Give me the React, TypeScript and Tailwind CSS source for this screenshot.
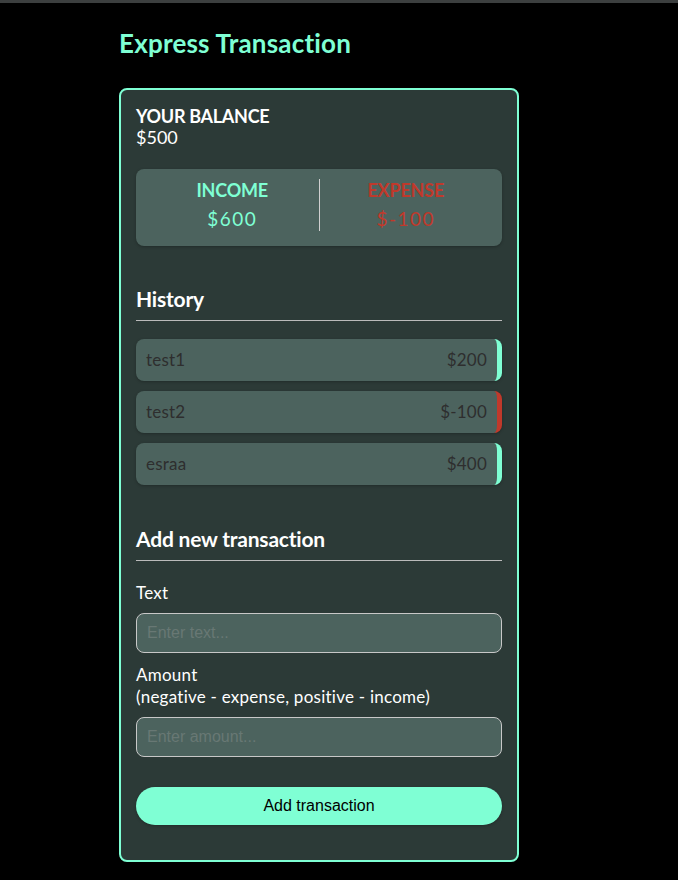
const transactions = [
  { id: 1, text: "test1", amount: 200 },
  { id: 2, text: "test2", amount: -100 },
  { id: 3, text: "esraa", amount: 400 },
];

export default function App() {
  const income = transactions.filter((t) => t.amount > 0).reduce((a, t) => a + t.amount, 0);
  const expense = transactions.filter((t) => t.amount < 0).reduce((a, t) => a + t.amount, 0);
  const total = income + expense;

  return (
    <div className="min-h-[880px] bg-black font-['Lato',sans-serif] border-t-[3px] border-[#3c3f3f]">
      <div className="w-[400px] ml-[119px] pt-[25px]">
        <h1 className="text-[26px] font-bold leading-[30px] text-[#7fffd4] tracking-[0.2px]">
          Express Transaction
        </h1>

        <div className="mt-[30px] rounded-lg border-2 border-[#7fffd4] bg-[#2c3a37] px-[15px] pt-[16px] pb-[35px] text-white">
          <h4 className="text-[18px] font-bold leading-[20px] tracking-[-0.3px]">YOUR BALANCE</h4>
          <div className="text-[18px] leading-[22px]">${total}</div>

          {/* Income / expense summary */}
          <div className="mt-[21px] flex rounded-lg bg-[#4c635e] px-[10px] pt-[10px] pb-[15px] shadow-[0_1px_3px_rgba(0,0,0,0.25)]">
            <div className="flex-1 text-center">
              <div className="text-[18px] font-bold leading-[22px] text-[#7fffd4] tracking-[-0.2px]">INCOME</div>
              <div className="mt-[6px] text-[19px] leading-[24px] tracking-[1.5px] text-[#7fffd4]">${income}</div>
            </div>
            <div className="w-px bg-[#d0d0d0]" />
            <div className="flex-1 text-center">
              <div className="text-[18px] font-bold leading-[22px] text-[#c0392b] tracking-[-0.2px]">EXPENSE</div>
              <div className="mt-[6px] text-[19px] leading-[24px] tracking-[1.5px] text-[#c0392b]">${expense}</div>
            </div>
          </div>

          <h3 className="mt-[41px] text-[21px] font-bold leading-[24px] tracking-[-0.2px] pb-[9px] border-b border-[#bbbbbb]">
            History
          </h3>
          <ul className="mt-[18px] flex flex-col gap-[10px]">
            {transactions.map((t) => (
              <li
                key={t.id}
                className={`flex h-[42px] items-center justify-between rounded-lg bg-[#4c635e] pl-[10px] pr-[10px] text-[17px] tracking-[0.2px] text-[#2e2e2e] shadow-[0_1px_3px_rgba(0,0,0,0.25)] border-r-[5px] ${
                  t.amount < 0 ? "border-[#c0392b]" : "border-[#7fffd4]"
                }`}
              >
                <span>{t.text}</span>
                <span>${t.amount}</span>
              </li>
            ))}
          </ul>

          <h3 className="mt-[42px] text-[21px] font-bold leading-[24px] tracking-[-0.2px] pb-[9px] border-b border-[#bbbbbb]">
            Add new transaction
          </h3>
          <form className="mt-[21px]" onSubmit={(e) => e.preventDefault()}>
            <label className="block text-[17px] leading-[22px] tracking-[0.25px]">Text</label>
            <input
              type="text"
              placeholder="Enter text..."
              className="mt-[9px] block h-[40px] w-full rounded-lg border border-[#c8c8c8] bg-[#4c635e] px-[10px] font-['Liberation_Sans',Arial,sans-serif] text-[16px] text-white placeholder:text-[#687874] outline-none"
            />
            <label className="mt-[11px] block text-[17px] leading-[22px] tracking-[0.25px]">
              Amount
              <br />
              (negative - expense, positive - income)
            </label>
            <input
              type="number"
              placeholder="Enter amount..."
              className="mt-[9px] block h-[40px] w-full rounded-lg border border-[#c8c8c8] bg-[#4c635e] px-[10px] font-['Liberation_Sans',Arial,sans-serif] text-[16px] text-white placeholder:text-[#687874] outline-none"
            />
            <button className="mt-[30px] h-[38px] w-full rounded-full bg-[#7fffd4] font-['Liberation_Sans',Arial,sans-serif] text-[16px] text-black shadow-[0_1px_3px_rgba(0,0,0,0.25)]">
              Add transaction
            </button>
          </form>
        </div>
      </div>
    </div>
  );
}
